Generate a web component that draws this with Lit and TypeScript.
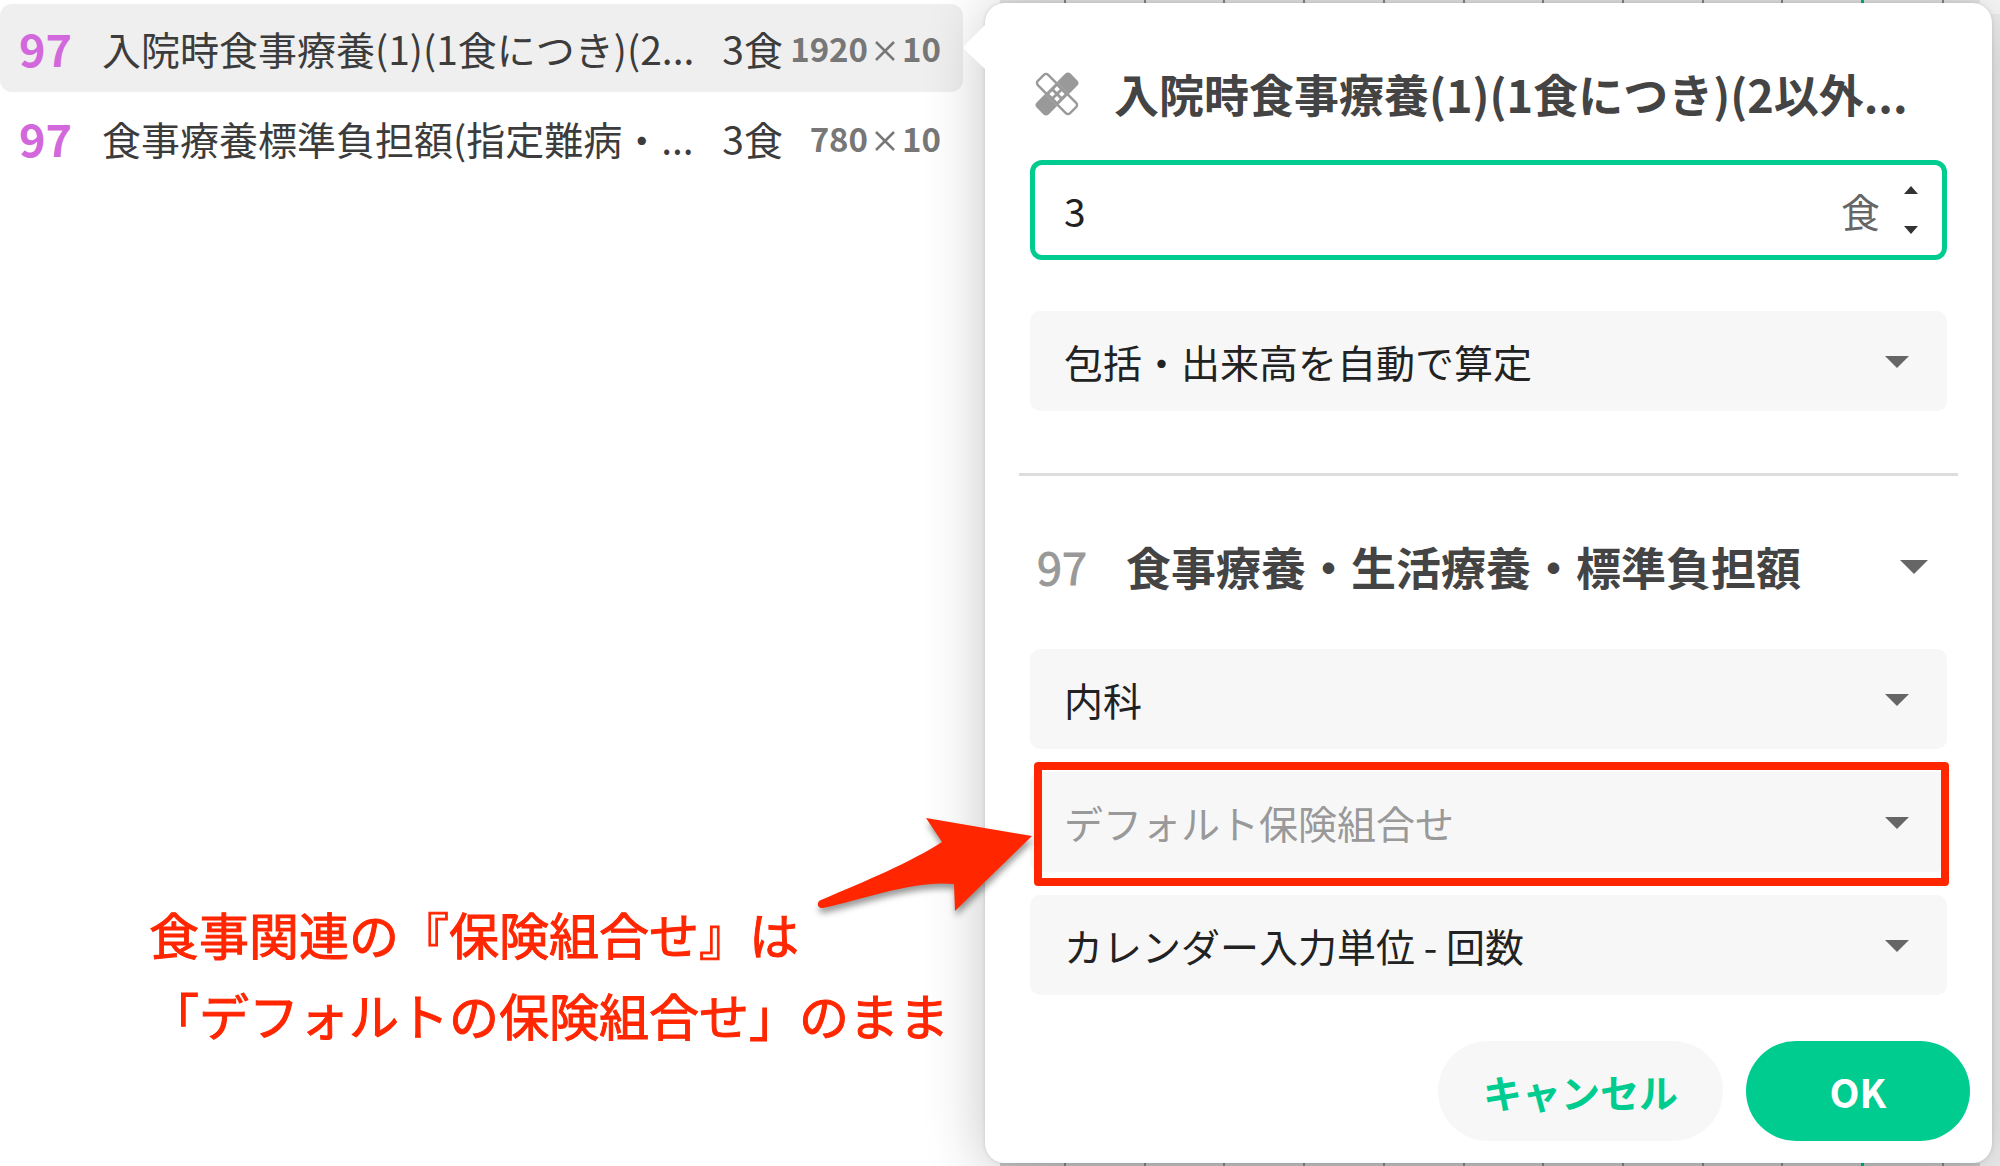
import { LitElement, html, css } from "lit";
import { customElement, property, state } from "lit/decorators.js";

interface Order {
  code: string;
  name: string;
  amount: string;
  points: string;
  times: string;
}

const ORDERS: Order[] = [
  { code: "97", name: "入院時食事療養(1)(1食につき)(2...", amount: "3食", points: "1920", times: "10" },
  { code: "97", name: "食事療養標準負担額(指定難病・...", amount: "3食", points: "780", times: "10" },
];

@customElement("order-list")
export class OrderList extends LitElement {
  static styles = css`
    :host {
      display: block;
    }
    .list {
      list-style: none;
      margin: 0;
      padding: 4px 0 0;
      display: flex;
      flex-direction: column;
      gap: 2px;
    }
    .row {
      display: grid;
      grid-template-columns: 83px minmax(0, 1fr) auto 158px;
      align-items: center;
      height: 88px;
      padding: 0 22px 0 19px;
      border-radius: 12px;
      font-size: 39px;
      line-height: 56px;
      color: #3c3c3c;
      white-space: nowrap;
    }
    .row.active {
      background: #efefef;
    }
    .code {
      font-size: 45px;
      font-weight: 700;
      color: #d268dc;
    }
    .points {
      display: flex;
      align-items: center;
      justify-content: flex-end;
      font-size: 33px;
      line-height: 48px;
      font-weight: 700;
      color: #777;
    }
    .cross {
      margin: 6px 7px 0;
    }
  `;

  render() {
    return html`<ul class="list">
      ${ORDERS.map(
        (o, i) => html`<li class="row ${i === 0 ? "active" : ""}">
          <span class="code">${o.code}</span>
          <span class="name">${o.name}</span>
          <span class="amount">${o.amount}</span>
          <span class="points">
            <span>${o.points}</span>
            <svg class="cross" width="20" height="20" viewBox="0 0 20 20" role="img" aria-label="×">
              <path d="M1 1L19 19M19 1L1 19" stroke="#777" stroke-width="2.500" />
            </svg>
            <span>${o.times}</span>
          </span>
        </li>`
      )}
    </ul>`;
  }
}

@customElement("select-field")
export class SelectField extends LitElement {
  @property() label = "";
  @property() value = "";
  @property({ type: Boolean }) muted = false;
  @property({ type: Boolean }) heading = false;

  static styles = css`
    :host {
      display: grid;
      align-items: center;
    }
    .control,
    .arrow {
      grid-area: 1 / 1;
    }
    .control {
      appearance: none;
      width: 100%;
      height: 100px;
      margin: 0;
      padding: 0 80px 0 34px;
      border: 0;
      border-radius: 10px;
      background: #f7f7f7;
      color: #222;
      font: inherit;
      font-size: 39px;
    }
    .control.muted {
      color: #999;
    }
    .control.heading {
      background: transparent;
      padding-left: 0;
      font-size: 45px;
      font-weight: 700;
      color: #444;
    }
    .arrow {
      justify-self: end;
      margin: 2px 38px 0 0;
      pointer-events: none;
      fill: #666;
    }
    .arrow.heading {
      margin-right: 19px;
    }
  `;

  render() {
    const kind = this.heading ? "heading" : this.muted ? "muted" : "";
    const w = this.heading ? 28 : 24;
    return html`<select class="control ${kind}" aria-label=${this.label}>
        <option>${this.value}</option>
      </select>
      <svg class="arrow ${kind}" width=${w} height=${w / 2} viewBox="0 0 24 12"><path d="M0 0H24L12 12Z" /></svg>`;
  }
}

@customElement("order-popover")
export class OrderPopover extends LitElement {
  @state() private amount = 3;

  static styles = css`
    :host {
      display: block;
      position: relative;
      border-radius: 20px;
      background: #fff;
      box-shadow: 0 0 4px rgba(0, 0, 0, 0.12), 0 6px 60px rgba(0, 0, 0, 0.24);
    }
    .pointer {
      position: absolute;
      left: -22px;
      top: 21px;
      fill: #fff;
    }
    .header {
      display: flex;
      align-items: center;
      gap: 34px;
      padding: 61px 45px 36px 49px;
    }
    .icon {
      flex: none;
    }
    .title {
      margin: 0;
      font-size: 45px;
      line-height: 60px;
      font-weight: 700;
      color: #444;
      white-space: nowrap;
    }
    .fields {
      display: flex;
      flex-direction: column;
      padding: 0 45px;
    }
    .basic {
      gap: 51px;
    }
    .detail {
      gap: 23px;
    }
    .number {
      display: flex;
      align-items: center;
      box-sizing: border-box;
      height: 100px;
      padding: 0 16px 0 29px;
      border: 5px solid #00cc8f;
      border-radius: 12px;
    }
    .amount {
      flex: 1;
      min-width: 0;
      border: 0;
      outline: 0;
      padding: 0;
      background: transparent;
      font: inherit;
      font-size: 39px;
      color: #222;
    }
    .unit {
      font-size: 39px;
      line-height: 56px;
      color: #666;
    }
    .steps {
      display: flex;
      flex-direction: column;
      margin-left: 16px;
    }
    .step {
      display: flex;
      align-items: center;
      justify-content: center;
      width: 30px;
      height: 40px;
      padding: 0;
      border: 0;
      background: transparent;
    }
    .divider {
      height: 3px;
      margin: 62px 34px 40px;
      border: 0;
      background: #ddd;
    }
    .section {
      display: grid;
      grid-template-columns: 89px minmax(0, 1fr);
      align-items: center;
      padding: 0 45px 0 52px;
      margin-bottom: 33px;
    }
    .code {
      font-size: 45px;
      line-height: 60px;
      color: #999;
      -webkit-text-stroke: 1px #999;
    }
    .footer {
      display: flex;
      justify-content: flex-end;
      gap: 23px;
      padding: 46px 22px 22px;
    }
    .button {
      height: 100px;
      padding: 0 45px;
      border: 0;
      border-radius: 50px;
      background: #f7f7f7;
      color: #00cc8f;
      font: inherit;
      font-size: 39px;
      font-weight: 700;
    }
    .button.primary {
      min-width: 224px;
      background: #00cc8f;
      color: #fff;
    }
  `;

  private step(by: number) {
    this.amount += by;
  }

  render() {
    return html`
      <svg class="pointer" width="23" height="46" viewBox="0 0 23 46"><path d="M23 0L2 21Q0 23.500 2 26L23 46Z" /></svg>
      <header class="header">
        <svg class="icon" width="46" height="46" viewBox="-23 -23 46 46">
          <g transform="rotate(45)" fill="#999">
            <rect x="-8.500" y="-24" width="17" height="48" rx="4" />
            <rect x="-24" y="-8.500" width="48" height="17" rx="4" fill="#fff" />
            <rect x="-22.800" y="-7.300" width="45.600" height="14.600" rx="3" fill="none" stroke="#999" stroke-width="2.400" />
            <rect x="-8.500" y="-8.500" width="17" height="17" />
            <g fill="#fff">
              <rect x="-5.400" y="-5.400" width="4" height="4" />
              <rect x="1.400" y="-5.400" width="4" height="4" />
              <rect x="-5.400" y="1.400" width="4" height="4" />
              <rect x="1.400" y="1.400" width="4" height="4" />
            </g>
          </g>
        </svg>
        <h2 class="title">入院時食事療養(1)(1食につき)(2以外...</h2>
      </header>
      <div class="fields basic">
        <div class="number">
          <input class="amount" inputmode="numeric" aria-label="数量" .value=${String(this.amount)} />
          <span class="unit">食</span>
          <span class="steps">
            <button class="step" aria-label="増やす" @click=${() => this.step(1)}>
              <svg width="14" height="8" viewBox="0 0 14 8"><path d="M0 8L7 0L14 8Z" fill="#333" /></svg>
            </button>
            <button class="step" aria-label="減らす" @click=${() => this.step(-1)}>
              <svg width="14" height="8" viewBox="0 0 14 8"><path d="M0 0H14L7 8Z" fill="#333" /></svg>
            </button>
          </span>
        </div>
        <select-field label="算定方法" value="包括・出来高を自動で算定"></select-field>
      </div>
      <hr class="divider" />
      <div class="section">
        <span class="code">97</span>
        <select-field heading label="診療区分" value="食事療養・生活療養・標準負担額"></select-field>
      </div>
      <div class="fields detail">
        <select-field label="診療科" value="内科"></select-field>
        <select-field muted label="保険組合せ" value="デフォルト保険組合せ"></select-field>
        <select-field label="入力単位" value="カレンダー入力単位 - 回数"></select-field>
      </div>
      <footer class="footer">
        <button class="button">キャンセル</button>
        <button class="button primary">OK</button>
      </footer>
    `;
  }
}

@customElement("app-root")
export class AppRoot extends LitElement {
  static styles = css`
    :host {
      display: block;
      background: #fff;
      font-family: "Noto Sans CJK JP", "Noto Sans", sans-serif;
    }
    .page {
      position: relative;
      display: grid;
      grid-template-columns: minmax(0, 963fr) minmax(0, 1037fr);
      min-height: 100vh;
      overflow: hidden;
    }
    .side {
      position: relative;
      padding: 3px 8px 2px 22px;
    }
    .calendar {
      position: absolute;
      inset: 0 0 0 37px;
      background: #f0f0f0;
      border-top: 14px solid #fafafa;
      box-sizing: border-box;
    }
    .ticks {
      position: absolute;
      left: 37px;
      right: 20px;
      height: 3px;
      padding: 0 36px 0 64px;
      display: flex;
      justify-content: space-between;
      background: #e8e8e8;
    }
    .ticks.top {
      top: 0;
    }
    .ticks.bottom {
      bottom: 0;
      background: #ccc;
    }
    .tick {
      width: 2px;
      background: #888;
    }
    .tick.today {
      width: 3px;
      background: #00b880;
    }
    .frame {
      position: absolute;
      left: 71px;
      right: 51px;
      top: 762px;
      height: 124px;
      box-sizing: border-box;
      border: 8px solid #ff2600;
      border-radius: 4px;
      pointer-events: none;
    }
    .note {
      position: absolute;
      left: 149px;
      top: 893px;
      margin: 0;
      font-size: 50px;
      line-height: 81px;
      color: #ff2600;
      -webkit-text-stroke: 1px #ff2600;
      white-space: nowrap;
    }
    .pointer {
      position: absolute;
      left: 806px;
      top: 807px;
      overflow: visible;
      filter: drop-shadow(1px 5px 3px rgba(0, 0, 0, 0.4));
      pointer-events: none;
    }
  `;

  private ticks(place: string) {
    return html`<div class="ticks ${place}">
      ${Array.from({ length: 12 }, (_, i) => html`<span class="tick ${i === 10 ? "today" : ""}"></span>`)}
    </div>`;
  }

  render() {
    return html`
      <main class="page">
        <order-list></order-list>
        <section class="side">
          <div class="calendar"></div>
          ${this.ticks("top")} ${this.ticks("bottom")}
          <order-popover></order-popover>
          <div class="frame"></div>
        </section>
        <p class="note">食事関連の『保険組合せ』は<br />「デフォルトの保険組合せ」のまま</p>
        <svg class="pointer" width="226" height="110" viewBox="0 0 226 110">
          <path
            d="M15 93C60 74 105 55 136 35L120 11L226 29L149 104L148 77C110 73 65 90 17 101C11 102 10 95 15 93Z"
            fill="#ff2600"
          />
        </svg>
      </main>
    `;
  }
}
